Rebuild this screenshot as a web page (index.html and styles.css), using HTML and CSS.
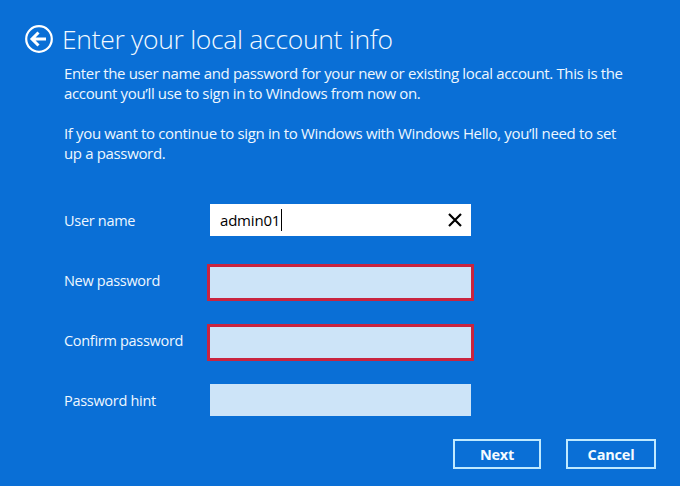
FILE: index.html
```html
<!DOCTYPE html>
<html lang="en">
<head>
<meta charset="utf-8">
<link rel="stylesheet" href="styles.css">
</head>
<body>
<div class="page">
  <div class="header">
    <svg class="back" width="28" height="28" viewBox="0 0 28 28">
      <circle cx="14" cy="14" r="12.8" fill="none" stroke="#fff" stroke-width="2.2"/>
      <path d="M7 14 H21 M13.5 7.5 L7 14 L13.5 20.5" fill="none" stroke="#fff" stroke-width="3" stroke-linejoin="miter"/>
    </svg>
    <h1 class="title">Enter your local account info</h1>
  </div>
  <div class="content">
    <p class="para">Enter the user name and password for your new or existing local account. This is the account you’ll use to sign in to Windows from now on.</p>
    <p class="para second">If you want to continue to sign in to Windows with Windows Hello, you’ll need to set up a password.</p>
    <div class="form">
      <div class="label">User name</div>
      <div class="field filled"><span class="value">admin01</span><span class="caret"></span>
        <svg class="clear" width="14" height="14" viewBox="0 0 14 14"><path d="M1 1 L13 13 M13 1 L1 13" stroke="#000" stroke-width="2.2"/></svg>
      </div>
      <div class="label">New password</div>
      <div class="field error"></div>
      <div class="label">Confirm password</div>
      <div class="field error"></div>
      <div class="label">Password hint</div>
      <div class="field"></div>
    </div>
    <div class="buttons">
      <div class="btn">Next</div>
      <div class="btn cancel">Cancel</div>
    </div>
  </div>
</div>
</body>
</html>
```

FILE: styles.css
```css
html, body {
  margin: 0;
  padding: 0;
  background: #0a6fd6;
  width: 680px;
  height: 486px;
  overflow: hidden;
}
body {
  font-family: "Open Sans", "Noto Sans", sans-serif;
  color: #eef7ff;
}
.page {
  padding: 25px 24px 0 25px;
}
.header {
  display: flex;
  align-items: center;
  gap: 9px;
  height: 28px;
}
.back {
  display: block;
  flex: none;
}
.title {
  margin: 0;
  font-weight: 300;
  font-size: 26.5px;
  line-height: 28px;
  letter-spacing: -0.3px;
  color: #f2f9ff;
}
.content {
  margin-left: 39px;
  margin-top: 10px;
}
.para {
  margin: 0;
  font-size: 15px;
  line-height: 20px;
  letter-spacing: -0.35px;
  width: 570px;
}
.second {
  margin-top: 20px;
}
.form {
  margin-top: 41px;
  display: grid;
  grid-template-columns: 146px 261px;
  grid-auto-rows: 32px;
  row-gap: 28px;
  align-items: center;
}
.label {
  font-size: 14.5px;
  letter-spacing: -0.3px;
  color: #eef7ff;
}
.field {
  height: 32px;
  background: #cde4f8;
  box-sizing: border-box;
}
.field.filled {
  background: #ffffff;
  display: flex;
  align-items: center;
  padding-left: 10px;
  padding-right: 9px;
  color: #000;
  font-size: 15px;
}
.value {
  letter-spacing: -0.2px;
}
.caret {
  width: 1px;
  height: 22px;
  background: #000;
  margin-left: 1px;
}
.clear {
  margin-left: auto;
  display: block;
}
.field.error {
  outline: 3px solid #c9243f;
  height: 31px;
  margin-top: 4px;
}
.buttons {
  display: flex;
  justify-content: flex-end;
  gap: 25px;
  margin-top: 23px;
}
.btn {
  width: 88px;
  height: 30px;
  box-sizing: border-box;
  border: 2px solid #bfe9ff;
  display: flex;
  align-items: center;
  justify-content: center;
  font-weight: 700;
  font-size: 14.5px;
  color: #f4fbff;
  letter-spacing: -0.2px;
}
.btn.cancel {
  width: 90px;
}
```
